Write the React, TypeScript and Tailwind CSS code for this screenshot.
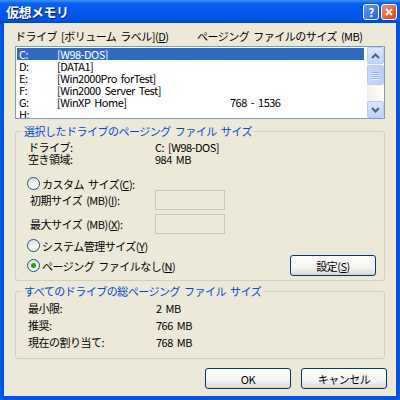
import React from 'react';

const drives = [
  { letter: 'C:', label: '[W98-DOS]', size: '', selected: true },
  { letter: 'D:', label: '[DATA1]', size: '' },
  { letter: 'E:', label: '[Win2000Pro forTest]', size: '' },
  { letter: 'F:', label: '[Win2000 Server Test]', size: '' },
  { letter: 'G:', label: '[WinXP Home]', size: '768 - 1536' },
  { letter: 'H:', label: '', size: '' },
];

function Radio({ checked }: { checked?: boolean }) {
  return (
    <span className="w-[13px] h-[13px] rounded-full border border-[#1c5180] bg-[linear-gradient(135deg,#dcdcd7_0%,#ffffff_80%)] flex items-center justify-center mr-[2px] shrink-0">
      {checked && <span className="w-[5px] h-[5px] rounded-full bg-[#21a121]" />}
    </span>
  );
}

function XpButton({ children, className }: { children: React.ReactNode; className?: string }) {
  return (
    <div
      className={
        'h-[21px] border border-[#003c74] rounded-[3px] bg-[linear-gradient(180deg,#ffffff_0%,#f4f4f0_60%,#e3e1d8_90%,#d6d0c5_100%)] flex items-center justify-center text-black ' +
        (className ?? '')
      }
    >
      {children}
    </div>
  );
}

function ScrollBtn({ up }: { up?: boolean }) {
  return (
    <div className="h-[17px] w-[17px] rounded-[2px] border border-[#b8ccf5] bg-[linear-gradient(180deg,#dbe6fd_0%,#c1d3fb_100%)] flex items-center justify-center">
      <svg width="9" height="6" viewBox="0 0 9 6">
        <path
          d={up ? 'M1 5 L4.5 1.5 L8 5' : 'M1 1 L4.5 4.5 L8 1'}
          fill="none"
          stroke="#4d6185"
          strokeWidth="2"
        />
      </svg>
    </div>
  );
}

export default function App() {
  return (
    <div className="w-[400px] h-[400px] bg-[#0054e3] flex flex-col font-['MS_UI_Gothic','Noto_Sans_CJK_JP',sans-serif] text-[11px] tracking-[-0.5px] [word-spacing:2px] leading-[12px] text-black overflow-hidden">
      {/* title bar */}
      <div className="h-[23px] shrink-0 flex items-center pl-[6px] pr-[3px] bg-[linear-gradient(180deg,#3d95ff_0%,#0a5ff0_15%,#0058ee_50%,#0054e3_85%,#0048c8_100%)]">
        <span className="text-white font-bold text-[13px] tracking-[-0.5px] [text-shadow:1px_1px_0_#0a1e82]">
          仮想メモリ
        </span>
        <div className="ml-auto flex gap-[2px] pt-[1px]">
          <div className="w-[16px] h-[16px] rounded-[3px] border border-white bg-[linear-gradient(135deg,#5e9bff_0%,#2461e8_100%)] flex items-center justify-center text-white text-[11px] font-bold">
            ?
          </div>
          <div className="w-[16px] h-[16px] rounded-[3px] border border-white bg-[linear-gradient(135deg,#f0906a_0%,#d8421a_100%)] flex items-center justify-center">
            <svg width="8" height="8" viewBox="0 0 8 8">
              <path d="M1 1 L7 7 M7 1 L1 7" stroke="white" strokeWidth="1.8" />
            </svg>
          </div>
        </div>
      </div>

      {/* client */}
      <div className="flex-1 mx-[4px] mb-[4px] bg-[#ece9d8] px-[11px] flex flex-col">
        <div className="mt-[6px] h-[14px] flex items-center">
          <span className="w-[182px]">
            ドライブ [ボリューム ラベル](<span className="underline">D</span>)
          </span>
          <span>ページング ファイルのサイズ (MB)</span>
        </div>

        {/* listbox */}
        <div className="mt-[3px] h-[73px] border border-[#7f9db9] bg-white flex">
          <div className="flex-1 p-[1px] pr-[3px] overflow-hidden">
            {drives.map((d) => (
              <div
                key={d.letter}
                className={
                  'h-[12px] leading-[12px] flex items-center shrink-0 ' +
                  (d.selected ? 'bg-[#316ac5] text-white' : '')
                }
              >
                <span className="w-[40px] pl-[2px]">{d.letter}</span>
                <span className="w-[173px]">{d.label}</span>
                <span>{d.size}</span>
              </div>
            ))}
          </div>
          <div className="w-[17px] bg-[linear-gradient(90deg,#f3f1ec_0%,#fefefb_100%)] flex flex-col">
            <ScrollBtn up />
            <div className="h-[20px] mt-[1px] rounded-[2px] border border-[#b8ccf5] bg-[linear-gradient(90deg,#c8d7fb_0%,#bccffa_100%)] flex flex-col items-center justify-center gap-[1px]">
              {[0, 1, 2, 3].map((i) => (
                <span key={i} className="w-[7px] h-[1px] bg-[#8caaf0] shadow-[0_1px_0_#eef4fe]" />
              ))}
            </div>
            <div className="flex-1" />
            <ScrollBtn />
          </div>
        </div>

        {/* group 1 */}
        <fieldset className="mt-[5px] h-[157px] border border-[#d0d0bf] rounded-[3px] px-[6px]">
          <legend className="px-[2px] text-[#0046d5] h-[14px] leading-[14px]">
            選択したドライブのページング ファイル サイズ
          </legend>
          <div className="pl-[5px] pt-[3px] flex flex-col">
            <div className="h-[12px] flex items-center">
              <span className="w-[128px] pl-[1px]">ドライブ:</span>
              <span>C: [W98-DOS]</span>
            </div>
            <div className="h-[12px] flex items-center">
              <span className="w-[128px] pl-[1px]">空き領域:</span>
              <span>984 MB</span>
            </div>
            <div className="mt-[12px] h-[13px] flex items-center">
              <Radio />
              <span>
                カスタム サイズ(<span className="underline">C</span>):
              </span>
            </div>
            <div className="h-[20px] flex items-center">
              <span className="w-[128px] pl-[3px]">
                初期サイズ (MB)(<span className="underline">I</span>):
              </span>
              <div className="w-[70px] h-[20px] border border-[#c9c7ba] bg-[#ece9d8]" />
            </div>
            <div className="mt-[4px] h-[20px] flex items-center">
              <span className="w-[128px] pl-[3px]">
                最大サイズ (MB)(<span className="underline">X</span>):
              </span>
              <div className="w-[70px] h-[20px] border border-[#c9c7ba] bg-[#ece9d8]" />
            </div>
            <div className="mt-[5px] h-[13px] flex items-center">
              <Radio />
              <span>
                システム管理サイズ(<span className="underline">Y</span>)
              </span>
            </div>
            <div className="mt-[3px] h-[21px] flex items-center">
              <Radio checked />
              <span>
                ページング ファイルなし(<span className="underline">N</span>)
              </span>
              <XpButton className="ml-auto mr-[2px] w-[86px]">
                設定(<span className="underline">S</span>)
              </XpButton>
            </div>
          </div>
        </fieldset>

        {/* group 2 */}
        <fieldset className="mt-[3px] h-[75px] border border-[#d0d0bf] rounded-[3px] px-[6px]">
          <legend className="px-[2px] text-[#0046d5] h-[14px] leading-[14px]">
            すべてのドライブの総ページング ファイル サイズ
          </legend>
          <div className="pl-[6px] pt-[1px] flex flex-col">
            {[
              ['最小限:', '2 MB'],
              ['推奨:', '766 MB'],
              ['現在の割り当て:', '768 MB'],
            ].map(([k, v]) => (
              <div key={k} className="h-[17px] flex items-center">
                <span className="w-[128px]">{k}</span>
                <span>{v}</span>
              </div>
            ))}
          </div>
        </fieldset>

        <div className="mt-[9px] flex justify-end gap-[10px] -mr-[2px]">
          <XpButton className="w-[86px]">OK</XpButton>
          <XpButton className="w-[86px]">キャンセル</XpButton>
        </div>
      </div>
    </div>
  );
}
